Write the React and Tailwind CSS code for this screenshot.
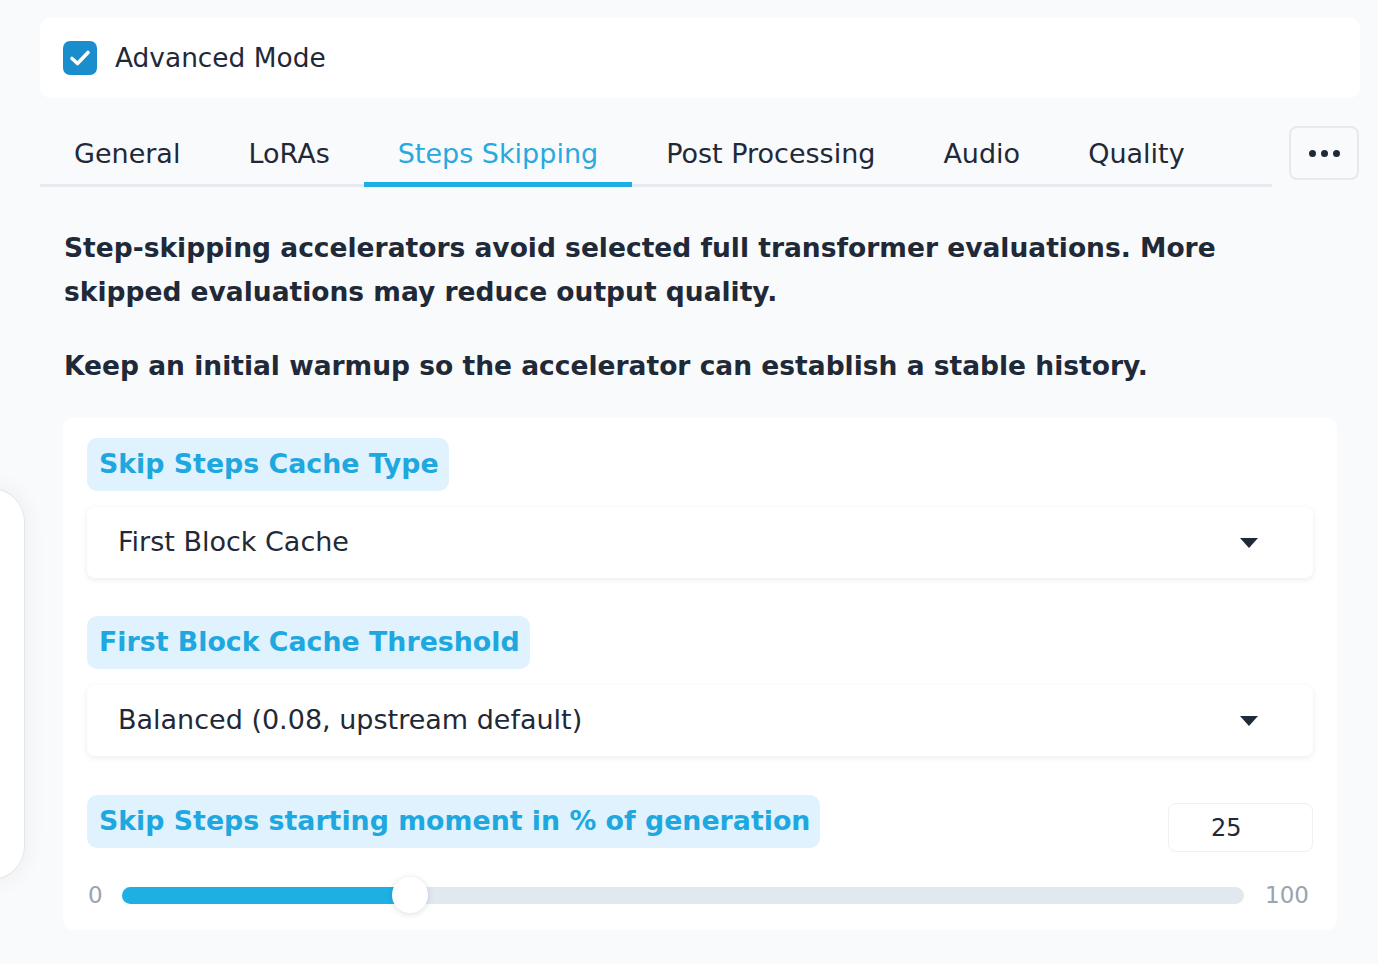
import React from "react";

const font = { fontFamily: '"DejaVu Sans", Verdana, sans-serif' };

function Caret() {
  return (
    <svg width="18" height="10" viewBox="0 0 18 10" className="shrink-0">
      <path d="M0 0 L18 0 L9 10 Z" fill="#1f2937" />
    </svg>
  );
}

function FieldLabel({ children }) {
  return (
    <div className="inline-flex h-[53px] items-center rounded-[10px] bg-[#e0f2fe] pl-3 pr-[10px] text-[26.8px] font-bold text-[#1ea8df]">
      {children}
    </div>
  );
}

function SelectBox({ value }) {
  return (
    <div className="mt-4 flex h-[71px] items-center justify-between rounded-lg bg-white pl-[31px] pr-[55px] shadow-[0_2px_6px_rgba(15,23,42,0.08)]">
      <span className="text-[27px] text-[#1f2937]">{value}</span>
      <Caret />
    </div>
  );
}

export default function App() {
  const tabs = ["General", "LoRAs", "Steps Skipping", "Post Processing", "Audio", "Quality"];
  const active = "Steps Skipping";
  const pct = 25;

  return (
    <div style={font} className="relative min-h-[964px] w-[1378px] overflow-hidden bg-[#f8fafc] pl-10 pr-[18px] pt-[18px]">
      {/* side drawer edge peeking in from the left */}
      <div className="absolute left-[-380px] top-[488px] h-[392px] w-[405px] rounded-[34px] border border-[#e2e5ea] bg-white shadow-[0_0_24px_rgba(15,23,42,0.06)]" />

      {/* advanced mode toggle */}
      <div className="flex h-20 items-center rounded-[10px] bg-white px-[23px]">
        <span className="flex h-[34px] w-[34px] items-center justify-center rounded-[7px] bg-[#1a8dcc]">
          <svg width="34" height="34" viewBox="0 0 34 34">
            <path d="M9 17.5 L14.5 22.5 L25 11.5" fill="none" stroke="white" strokeWidth="3.6" strokeLinecap="round" strokeLinejoin="round" />
          </svg>
        </span>
        <span className="ml-[18px] text-[26.4px] text-[#1f2937]">Advanced Mode</span>
      </div>

      {/* tabs */}
      <div className="mt-7 flex items-start">
        <div className="flex h-[61px] w-[1232px] border-b-[3px] border-[#e5e9f0]">
          {tabs.map((t) => (
            <div
              key={t}
              className={
                "relative flex items-center px-[34px] pb-[2px] text-[27px] " +
                (t === active ? "text-[#2aa9df]" : "text-[#1f2937]")
              }
            >
              {t}
              {t === active && <div className="absolute bottom-[-3px] left-0 right-0 h-[5px] bg-[#1eaee3]" />}
            </div>
          ))}
        </div>
        <div className="ml-[17px] flex h-[54px] w-[70px] items-center justify-center gap-[5px] rounded-lg border-2 border-[#e6e9ef] bg-[#f8fafc]">
          <span className="h-[7px] w-[7px] rounded-full bg-[#1f2937]" />
          <span className="h-[7px] w-[7px] rounded-full bg-[#1f2937]" />
          <span className="h-[7px] w-[7px] rounded-full bg-[#1f2937]" />
        </div>
      </div>

      {/* tab content */}
      <div className="px-[23px]">
        <p className="mt-[39px] pl-px text-[26.5px] font-bold leading-[44px] text-[#1f2937]">
          Step-skipping accelerators avoid selected full transformer evaluations. More skipped evaluations may reduce output quality.
        </p>
        <p className="mt-[30px] pl-px text-[26.5px] font-bold leading-[44px] text-[#1f2937]">
          Keep an initial warmup so the accelerator can establish a stable history.
        </p>

        <div className="mt-[30px] rounded-[10px] bg-white px-6 pb-[15px] pt-5">
          <FieldLabel>Skip Steps Cache Type</FieldLabel>
          <SelectBox value="First Block Cache" />

          <div className="mt-[38px]">
            <FieldLabel>First Block Cache Threshold</FieldLabel>
          </div>
          <SelectBox value="Balanced (0.08, upstream default)" />

          <div className="mt-[39px] flex items-start justify-between">
            <FieldLabel>Skip Steps starting moment in % of generation</FieldLabel>
            <div className="mt-2 flex h-[49px] w-[145px] items-center rounded-lg border border-[#eef1f4] bg-white pl-[42px] text-[24px] text-[#1f2937]">
              25
            </div>
          </div>

          <div className="mt-[23px] flex h-[40px] items-center">
            <span className="w-[35px] pl-px text-[23px] text-[#9aa3b2]">0</span>
            <div className="relative h-[17px] flex-1 rounded-full bg-[#e2e8f0]">
              <div className="h-full rounded-full bg-[#1eb0e3]" style={{ width: `${pct + 0.7}%` }} />
              <div
                className="absolute top-1/2 h-[36px] w-[36px] -translate-x-1/2 -translate-y-1/2 rounded-full bg-white shadow-[0_1px_6px_rgba(15,23,42,0.15)]"
                style={{ left: `${pct + 0.7}%` }}
              />
            </div>
            <span className="w-[69px] pr-1 text-right text-[23px] text-[#9aa3b2]">100</span>
          </div>
        </div>
      </div>
    </div>
  );
}
